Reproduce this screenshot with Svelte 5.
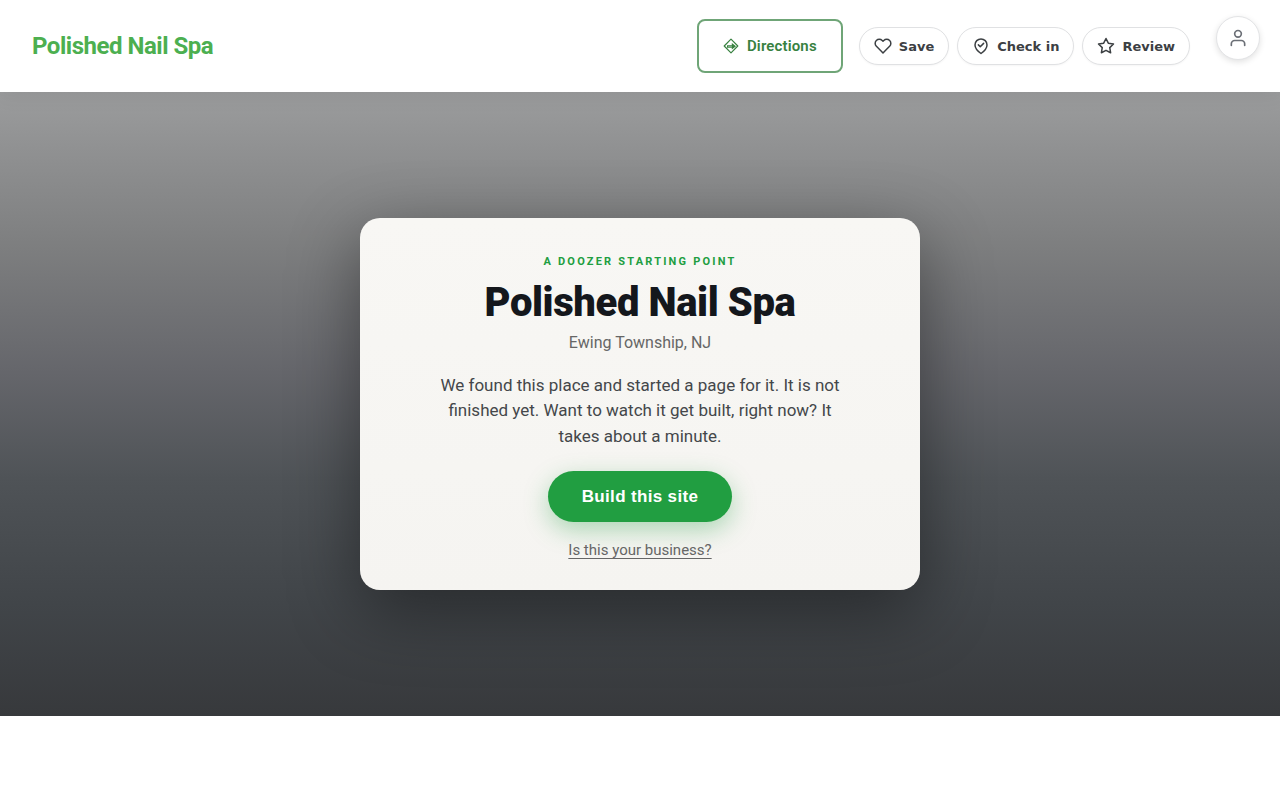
<script>
	let name = "Polished Nail Spa"
	let place = "Ewing Township, NJ"

	let actions = [
		{ id: "save", label: "Save" },
		{ id: "checkin", label: "Check in" },
		{ id: "review", label: "Review" }
	]
</script>


<header>
	<a class="brand" href="#top">{name}</a>

	<div class="header-actions">
		<a class="directions" href="#directions">
			<svg width="16" height="16" viewBox="0 0 16 16" fill="none" stroke="currentColor" stroke-width="1.2" aria-hidden="true">
				<path d="M8 1.200 14.800 8 8 14.800 1.200 8Z" stroke-linejoin="round" />
				<path d="M4 7.300H8.800V5L13 8.300 8.800 11.500V9.700H4Z" fill="currentColor" stroke="none" />
				<path d="M5 8.600H9" stroke="#fff" stroke-width=".4" />
			</svg>
			Directions
		</a>

		<div class="pills">
			{#each actions as action}
				<button class="pill">
					<svg width="18" height="18" viewBox="0 0 24 24" fill="none" stroke="currentColor" stroke-width="2" stroke-linecap="round" stroke-linejoin="round" aria-hidden="true">
						{#if action.id == "save"}
							<path d="M20.84 4.61a5.5 5.5 0 0 0-7.78 0L12 5.67l-1.06-1.06a5.5 5.5 0 0 0-7.78 7.78l1.06 1.06L12 21.23l7.78-7.78 1.06-1.06a5.5 5.5 0 0 0 0-7.78z" />
						{:else if action.id == "checkin"}
							<path d="M20 10.5c0 5.500-8 11.500-8 11.500s-8-6-8-11.500a8 8 0 0 1 16 0z" />
							<path d="m8.500 10.500 2.500 2.500 4.500-4.500" />
						{:else}
							<path d="m12 2 3.090 6.260L22 9.270l-5 4.870 1.180 6.880L12 17.770l-6.180 3.250L7 14.140 2 9.270l6.910-1.010z" />
						{/if}
					</svg>
					{action.label}
				</button>
			{/each}
		</div>
	</div>
</header>

<button class="account" aria-label="Account">
	<svg width="20" height="20" viewBox="0 0 24 24" fill="none" stroke="currentColor" stroke-width="2" stroke-linecap="round" stroke-linejoin="round" aria-hidden="true">
		<path d="M20 21v-2a4 4 0 0 0-4-4H8a4 4 0 0 0-4 4v2" />
		<circle cx="12" cy="7" r="4" />
	</svg>
</button>

<main id="top">
	<section class="card">
		<p class="eyebrow">A Doozer starting point</p>
		<h1>{name}</h1>
		<p class="place">{place}</p>
		<p class="intro">We found this place and started a page for it. It is not finished yet. Want to watch it get built, right now? It takes about a minute.</p>
		<button class="build">Build this site</button>
		<a class="claim" href="#claim">Is this your business?</a>
	</section>
</main>


<style>

	/* - general - */
	:global(body) {
		background: #fff;

		font-family: Roboto, "Liberation Sans", sans-serif;
	}

	header, header *, main, main *, .account {
		box-sizing: border-box;
	}

	a {
		text-decoration: none;
	}

	button {
		cursor: pointer;
	}

	/* header */
	header {
		position: relative;
		z-index: 1;

		padding: 19px 90px 19px 32px;

		display: flex;
		align-items: center;
		justify-content: space-between;

		background: #fff;
		box-shadow: 0 2px 20px rgba(0, 0, 0, 0.08);
	}

	.brand {
		color: #4caf50;

		font-size: 24px;
		font-weight: 700;
		letter-spacing: -0.02em;
	}

	.header-actions {
		display: flex;
		align-items: center;
		gap: 16px;
	}

	.directions {
		height: 54px;
		padding: 0 24px;

		display: flex;
		align-items: center;
		gap: 8px;

		border: 2px solid #6fa577;
		border-radius: 8px;

		color: #37813f;

		font-size: 15px;
		font-weight: 600;
		letter-spacing: 0.01em;
	}

	.pills {
		display: flex;
		gap: 8px;
	}

	.pill {
		height: 38px;
		padding: 0 14px;

		display: flex;
		align-items: center;
		gap: 7px;

		background: #fff;
		border: 1px solid #e0e1e3;
		border-radius: 19px;
		box-shadow: 0 1px 2px rgba(0, 0, 0, 0.04);

		color: #3c4043;

		font-family: "DejaVu Sans", sans-serif;
		font-size: 13px;
		font-weight: 700;
	}

	/* account button floats above the header */
	.account {
		position: absolute;
		top: 16px;
		right: 20px;
		z-index: 2;

		width: 44px;
		height: 44px;
		padding: 0;

		display: flex;
		align-items: center;
		justify-content: center;

		background: #fff;
		border: 1px solid #e3e4e6;
		border-radius: 50%;
		box-shadow: 0 2px 6px rgba(0, 0, 0, 0.12);

		color: #6b6f76;
	}

	/* hero */
	main {
		min-height: 78vh;
		padding: 40px 20px;

		display: flex;
		align-items: center;
		justify-content: center;

		background: linear-gradient(#9b9c9d 0%, #7d7e7f 25%, #65666b 45%, #4f5357 62%, #414549 82%, #37393c 100%);
	}

	.card {
		width: 100%;
		max-width: 560px;
		padding: 36px 40px 30px;

		display: flex;
		flex-direction: column;
		align-items: center;

		background: linear-gradient(#f8f7f4, #f5f4f1);
		border-radius: 20px;
		box-shadow: 0 20px 70px rgba(0, 0, 0, 0.42);

		text-align: center;
	}

	.card p, h1 {
		margin: 0;
	}

	.card .eyebrow {
		margin-bottom: 10px;

		color: #219e41;

		font-size: 11px;
		font-weight: 700;
		line-height: 16px;
		letter-spacing: 0.2em;
		text-transform: uppercase;
	}

	h1 {
		color: #14171c;

		font-size: 40px;
		font-weight: 900;
		line-height: 46px;
		letter-spacing: -0.01em;
	}

	.card .place {
		margin-top: 7px;

		color: #666;

		font-size: 16px;
		line-height: 20px;
	}

	.card .intro {
		max-width: 420px;
		margin: 20px 0 22px;

		color: #44474a;

		font-size: 17px;
		line-height: 1.5;
	}

	.build {
		padding: 16px 34px;

		background: #219e41;
		border: none;
		border-radius: 26px;
		box-shadow: 0 8px 24px rgba(33, 158, 65, 0.35);

		color: #fff;

		font-family: "Liberation Sans", sans-serif;
		font-size: 17px;
		font-weight: 700;
		line-height: 19px;
		letter-spacing: 0.02em;
	}

	.claim {
		margin-top: 18px;

		color: #666;

		font-size: 15px;
		line-height: 20px;
		text-decoration: underline;
		text-underline-offset: 3px;
	}

</style>
